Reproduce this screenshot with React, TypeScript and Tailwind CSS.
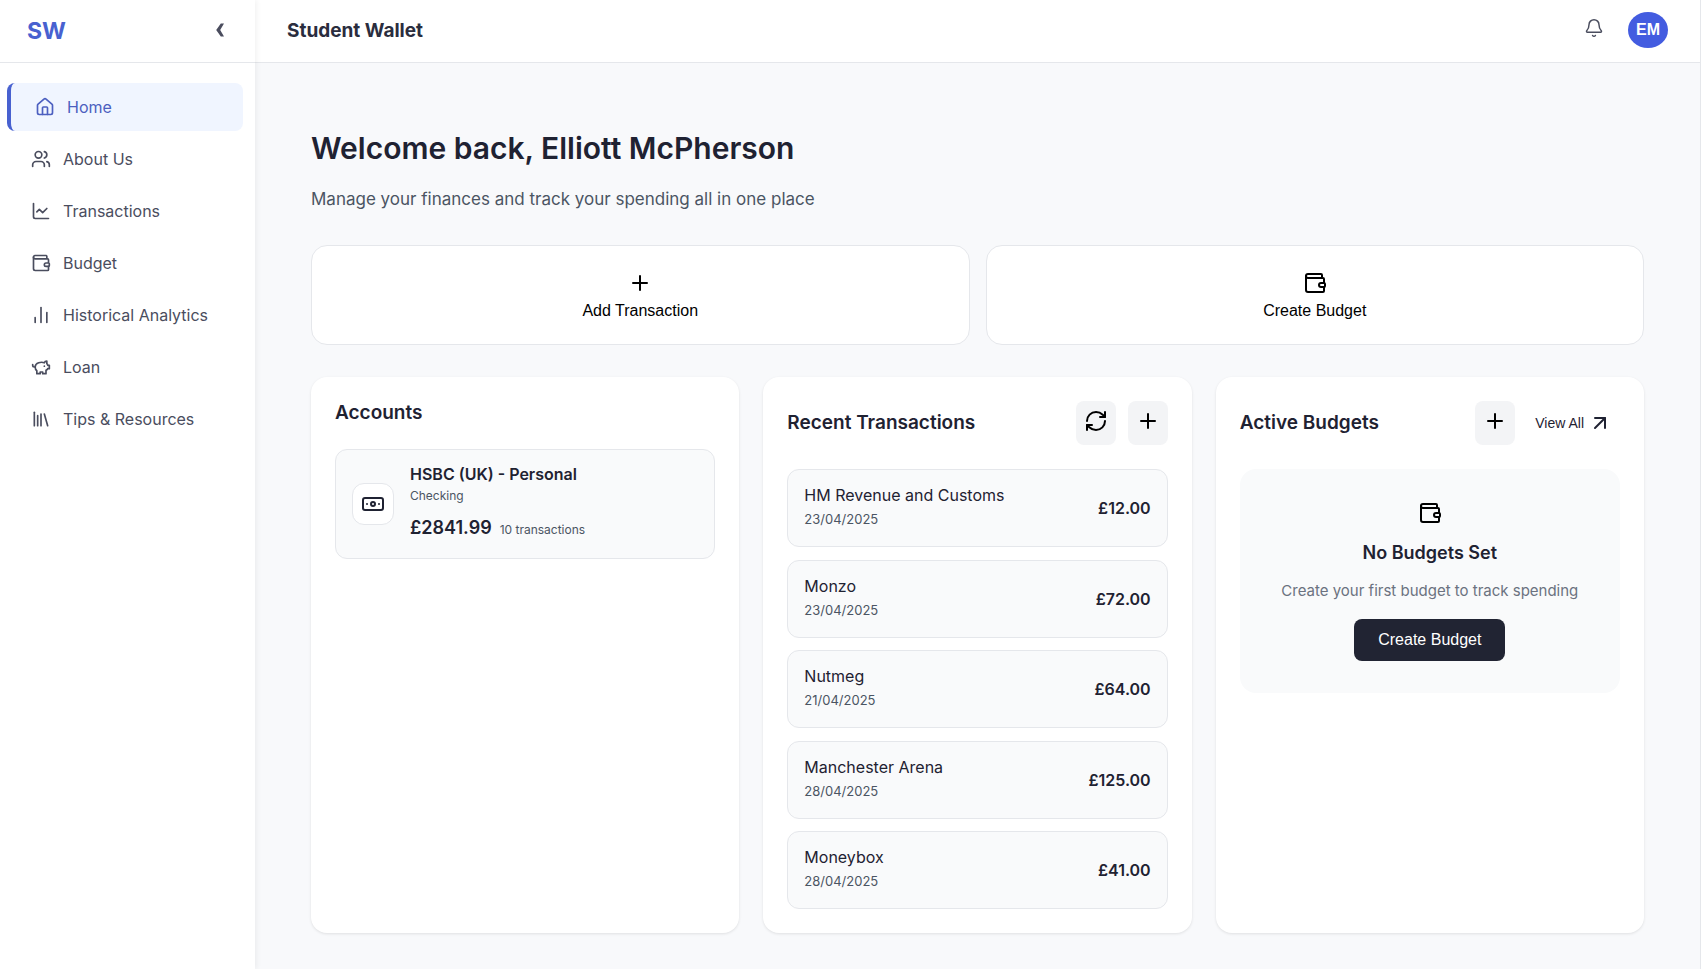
import type { ReactNode } from "react";
import {
  ArrowUpRight,
  Banknote,
  Bell,
  ChartLine,
  ChartNoAxesColumn,
  House,
  Library,
  Plus,
  RefreshCw,
  Users,
  Wallet,
} from "lucide-react";

type IconProps = { size?: number; className?: string };
type IconType = (props: IconProps) => ReactNode;
type NavItem = { label: string; icon: ReactNode; active?: boolean };
type Transaction = { name: string; date: string; amount: string };

function PiggyBank({ size = 24 }: IconProps) {
  return (
    <svg
      width={size}
      height={size}
      viewBox="0 0 24 24"
      fill="none"
      stroke="currentColor"
      strokeWidth="2"
      strokeLinecap="round"
      strokeLinejoin="round"
      aria-hidden="true"
    >
      <path d="M19 5c-1.5 0-2.8 1.4-3 2-3.5-1.5-11-.3-11 5 0 1.8 0 3 2 4.5V20h4v-2h3v2h4v-4c1-.5 1.7-1 2-2h2v-4h-2c0-1-.5-1.5-1-2V5z" />
      <path d="M2 9v1c0 1.1.9 2 2 2h1" />
      <path d="M16 11h.01" />
    </svg>
  );
}

const navItems: NavItem[] = [
  { label: "Home", icon: <House size={20} aria-hidden="true" />, active: true },
  { label: "About Us", icon: <Users size={20} aria-hidden="true" /> },
  { label: "Transactions", icon: <ChartLine size={20} aria-hidden="true" /> },
  { label: "Budget", icon: <Wallet size={20} aria-hidden="true" /> },
  { label: "Historical Analytics", icon: <ChartNoAxesColumn size={20} aria-hidden="true" /> },
  { label: "Loan", icon: <PiggyBank size={20} /> },
  { label: "Tips & Resources", icon: <Library size={20} aria-hidden="true" /> },
];

const transactions: Transaction[] = [
  { name: "HM Revenue and Customs", date: "23/04/2025", amount: "£12.00" },
  { name: "Monzo", date: "23/04/2025", amount: "£72.00" },
  { name: "Nutmeg", date: "21/04/2025", amount: "£64.00" },
  { name: "Manchester Arena", date: "28/04/2025", amount: "£125.00" },
  { name: "Moneybox", date: "28/04/2025", amount: "£41.00" },
];

function Sidebar() {
  return (
    <aside className="z-10 flex w-[255px] shrink-0 flex-col bg-white shadow-[2px_0_5px_rgba(0,0,0,0.05)]">
      <div className="flex h-[63px] items-center justify-between border-b border-[#e5e7eb] pr-[30px] pl-[27px]">
        <span className="text-[23px] font-bold text-[#4861d0]">SW</span>
        <button type="button" aria-label="Collapse sidebar" className="pb-0.5 text-[#4a4d5e]">
          <svg width="10" height="14" viewBox="0 0 10 14" fill="currentColor" aria-hidden="true">
            <path d="M5.8 0.5H9L5.2 7L9 13.5H5.8L1.2 7Z" />
          </svg>
        </button>
      </div>
      <nav className="flex flex-col gap-1 pt-5 pr-3 pl-[7px]">
        {navItems.map(({ label, icon, active }) => (
          <a
            key={label}
            href="#"
            aria-current={active ? "page" : undefined}
            className={
              active
                ? "flex h-12 items-center gap-3 rounded-lg border-l-4 border-[#4861d0] bg-[#f0f5ff] pl-6 text-base text-[#4c5fc0]"
                : "flex h-12 items-center gap-3 rounded-lg pl-6 text-base text-[#4a4d5e]"
            }
          >
            {icon}
            {label}
          </a>
        ))}
      </nav>
    </aside>
  );
}

function Header() {
  return (
    <header className="flex h-[63px] items-center justify-between border-b border-[#e5e7eb] bg-white px-8 pb-0.5">
      <div className="pt-0.5 text-[19px] font-bold text-[#2a2d3e]">Student Wallet</div>
      <div className="flex items-center gap-6">
        <button type="button" aria-label="Notifications" className="pb-1 text-[#4a4d5e]">
          <Bell size={20} strokeWidth={1.75} aria-hidden="true" />
        </button>
        <button
          type="button"
          aria-label="Account EM"
          className="h-9 w-10 rounded-[50%] bg-[#435ce0] font-['Liberation_Sans',sans-serif] text-base font-bold text-white"
        >
          EM
        </button>
      </div>
    </header>
  );
}

function QuickAction({ icon: Icon, label }: { icon: IconType | typeof Plus; label: string }) {
  return (
    <button
      type="button"
      className="flex h-[100px] flex-col items-center justify-center gap-1 rounded-2xl border border-[#e5e7eb] bg-white pt-1 font-['Liberation_Sans',sans-serif] text-base text-black"
    >
      <Icon size={24} />
      {label}
    </button>
  );
}

function IconButton({ icon: Icon, label }: { icon: IconType | typeof Plus; label: string }) {
  return (
    <button
      type="button"
      aria-label={label}
      className="flex h-11 w-10 items-center justify-center rounded-lg bg-[#f3f4f6] pb-1 text-black"
    >
      <Icon size={24} />
    </button>
  );
}

function Card({ children }: { children: ReactNode }) {
  return (
    <section className="flex min-h-[556px] flex-col rounded-2xl bg-white p-6 shadow-[0_1px_3px_rgba(0,0,0,0.1)]">
      {children}
    </section>
  );
}

function CardTitle({ children }: { children: ReactNode }) {
  return <h2 className="text-[19px] leading-6 font-semibold text-[#1f2232]">{children}</h2>;
}

function AccountsCard() {
  return (
    <Card>
      <CardTitle>Accounts</CardTitle>
      <div className="mt-6 flex items-center gap-4 rounded-xl border border-[#e5e7eb] bg-[#f9fafb] px-4 py-3.5">
        <div className="flex size-[42px] shrink-0 items-center justify-center rounded-xl border border-[#e5e7eb] bg-white text-[#1f2232]">
          <Banknote size={24} aria-hidden="true" />
        </div>
        <div className="text-[#1f2232]">
          <h3 className="text-base leading-5 font-semibold">HSBC (UK) - Personal</h3>
          <p className="text-xs leading-6 text-[#4b5563]">Checking</p>
          <p className="mt-1 flex items-baseline gap-2">
            <span className="text-lg leading-8 font-semibold">£2841.99</span>
            <span className="text-xs text-[#4b5563]">10 transactions</span>
          </p>
        </div>
      </div>
    </Card>
  );
}

function TransactionsCard() {
  return (
    <Card>
      <div className="flex items-center justify-between">
        <CardTitle>Recent Transactions</CardTitle>
        <div className="flex gap-3">
          <IconButton icon={RefreshCw} label="Refresh transactions" />
          <IconButton icon={Plus} label="Add transaction" />
        </div>
      </div>
      <ul className="mt-6 flex flex-1 flex-col justify-between gap-3">
        {transactions.map((t) => (
          <li
            key={t.name}
            className="flex h-[78px] items-center justify-between rounded-xl border border-[#e5e7eb] bg-[#f9fafb] px-4"
          >
            <div className="pb-0.5">
              <p className="text-base leading-6 text-[#1f2232]">{t.name}</p>
              <p className="text-[13px] leading-6 text-[#4b5563]">{t.date}</p>
            </div>
            <span className="text-base font-semibold text-[#1f2232]">{t.amount}</span>
          </li>
        ))}
      </ul>
    </Card>
  );
}

function BudgetsCard() {
  return (
    <Card>
      <div className="flex items-center justify-between">
        <CardTitle>Active Budgets</CardTitle>
        <div className="flex items-center gap-3 pr-2">
          <IconButton icon={Plus} label="Add budget" />
          <a
            href="#"
            className="flex items-center gap-1 pl-2 font-['Liberation_Sans',sans-serif] text-sm text-[#1f2232]"
          >
            View All
            <ArrowUpRight size={24} aria-hidden="true" />
          </a>
        </div>
      </div>
      <div className="mt-6 flex flex-col items-center rounded-2xl bg-[#f9fafb] px-6 py-8">
        <Wallet size={24} className="text-black" aria-hidden="true" />
        <h3 className="mt-3.5 text-lg leading-7 font-semibold text-[#1f2232]">No Budgets Set</h3>
        <p className="mt-3 text-[15px] leading-6 text-[#6b7280]">Create your first budget to track spending</p>
        <button
          type="button"
          className="mt-4 h-[42px] rounded-lg bg-[#212433] px-6 font-['Liberation_Sans',sans-serif] text-base text-white"
        >
          Create Budget
        </button>
      </div>
    </Card>
  );
}

export default function App() {
  return (
    <div className="flex min-h-screen bg-[#f8f9fb] font-['Inter',sans-serif]">
      <Sidebar />
      <div className="flex min-w-0 flex-1 flex-col border-r border-[#e5e7eb]">
        <Header />
        <main className="px-14 pt-16 pb-9">
          <h1 className="text-[30px] leading-[42px] font-semibold text-[#1f2232]">
            Welcome back, Elliott McPherson
          </h1>
          <p className="mt-4 text-[17px] leading-7 text-[#4b5563]">
            Manage your finances and track your spending all in one place
          </p>
          <div className="mt-8 grid grid-cols-2 gap-4">
            <QuickAction icon={Plus} label="Add Transaction" />
            <QuickAction icon={Wallet} label="Create Budget" />
          </div>
          <div className="mt-8 grid grid-cols-3 gap-6">
            <AccountsCard />
            <TransactionsCard />
            <BudgetsCard />
          </div>
        </main>
      </div>
    </div>
  );
}
